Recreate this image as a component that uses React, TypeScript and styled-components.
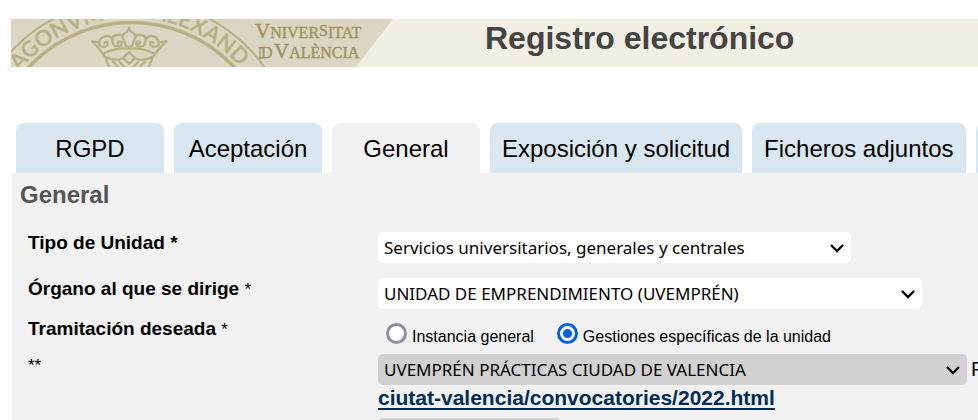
import React from 'react';
import styled, { createGlobalStyle } from 'styled-components';

const Global = createGlobalStyle`
  * { box-sizing: border-box; }
  html { scrollbar-width: none; }
  body {
    margin: 0;
    overflow-x: hidden;
    background: #fff;
    color: #000;
    font-family: "Liberation Sans", Arial, sans-serif;
  }
`;
const Page = styled.div`
  padding: 19px 0 0 11px;
`;
const Banner = styled.header`
  display: flex;
  background: #f1efe3;
`;
const LogoSvg = styled.svg`
  flex: none;
  display: block;
  width: 382px;
  height: 48px;
`;
const Title = styled.h1`
  flex: 1;
  margin: 0;
  padding-left: 92px;
  color: #444;
  font-size: 32px;
  line-height: 38px;
  white-space: nowrap;
`;
const Tabs = styled.nav`
  display: flex;
  gap: 10px;
  margin-top: 56px;
  padding-left: 5px;
  overflow: hidden;
`;
const Tab = styled.button<{ $active?: boolean }>`
  flex: none;
  min-width: 148px;
  height: 50px;
  padding: 2px 12px 0;
  border: 0;
  border-radius: 8px 8px 0 0;
  background: ${(p) => (p.$active ? '#f1f1f1' : '#d9e7f0')};
  color: #000;
  font: 24px "Liberation Sans", Arial, sans-serif;
  white-space: nowrap;
`;
const Panel = styled.main`
  margin-left: 1px;
  padding: 4px 0 0 8px;
  background: #f1f1f1;
`;
const Heading = styled.h2`
  margin: 0;
  color: #555;
  font-size: 24px;
  line-height: 36px;
`;
const Form = styled.form`
  display: grid;
  grid-template-columns: 350px 1fr;
  padding: 19px 0 0 8px;
`;
const Label = styled.label`
  font-size: 19px;
  line-height: 22px;
`;
const Star = styled.span`
  font-size: 17px;
`;
const Field = styled.div<{ $space?: number }>`
  min-width: 0;
  padding-bottom: ${(p) => p.$space ?? 0}px;
`;
const SelectBox = styled.span<{ $width: number }>`
  display: inline-grid;
  flex: none;
  width: ${(p) => p.$width}px;
  align-items: center;
  vertical-align: top;
`;
const SelectInput = styled.select<{ $muted?: boolean }>`
  grid-area: 1 / 1;
  width: 100%;
  height: 31px;
  padding: 0 28px 0 6px;
  border: 0;
  border-radius: 5px;
  appearance: none;
  background: ${(p) => (p.$muted ? '#d1d1d1' : '#fff')};
  color: #000;
  font: 17px "Noto Sans", Verdana, sans-serif;
`;
const Chevron = styled.svg`
  grid-area: 1 / 1;
  justify-self: end;
  width: 14px;
  height: 10px;
  margin-right: 7px;
  pointer-events: none;
`;
const Radios = styled.div`
  display: flex;
  gap: 23px;
  padding: 5px 0 4px 8px;
`;
const RadioLabel = styled.label`
  display: flex;
  gap: 5px;
  font-size: 16px;
  line-height: 27px;
  white-space: nowrap;
`;
const Radio = styled.input`
  width: 21px;
  height: 21px;
  margin: 0;
  border: 3px solid #8f8f9d;
  border-radius: 50%;
  appearance: none;
  background: #fff;
  &:checked {
    border-color: #0061e0;
    background: radial-gradient(circle, #0061e0 4px, #fff 5px);
  }
`;
const Line = styled.div`
  display: flex;
  gap: 4px;
  overflow: hidden;
  font-size: 20px;
  line-height: 31px;
`;
const Link = styled.a`
  display: block;
  padding-bottom: 7px;
  color: #002d55;
  font-size: 21px;
  font-weight: bold;
  line-height: 26px;
  text-decoration-thickness: 2px;
  text-underline-offset: 3px;
`;

function Logo() {
  return (
    <LogoSvg viewBox="0 0 382 48" role="img" aria-label="Universitat de València">
      <path d="M0 0H382L345 48H0Z" fill="#dad6c3" />
      <g fill="none" stroke="#b8b084">
        <circle cx="120.5" cy="144" r="164" strokeWidth="2" />
        <circle cx="120.5" cy="144" r="140.5" strokeWidth="3.5" />
        <path id="ring" d="M-24.5 144A145 145 0 0 1 265.5 144" stroke="none" />
        <g transform="translate(74 -1) scale(.3333)" strokeWidth="7" strokeLinecap="round" strokeLinejoin="round">
          <path d="M22 70L42 73C40 88 66 92 68 78C69 70 60 70 58 75M42 73C48 50 76 48 82 66C84 78 86 86 98 86C112 86 114 70 104 70C98 70 96 76 100 78M82 66C82 48 102 48 112 54L118 46Q130 42 132 29Q134 42 146 46L152 54C162 48 182 48 182 66M160 78C168 76 168 70 160 70C150 70 152 86 166 86C178 86 180 78 182 66C188 48 216 50 222 73M206 75C204 70 195 70 196 78C198 92 224 88 222 73L244 70" />
          <path d="M22 70Q50 98 62 120Q66 134 74 150M244 70Q214 98 202 120Q198 134 190 150" />
          <path d="M112 54C112 66 122 70 120 78Q122 86 132 86Q142 86 144 78C142 70 152 66 152 54" />
          <path d="M58 106Q94 88 132 92Q170 88 206 106M64 118Q98 132 114 120L132 102L150 120Q166 132 200 118M84 132Q100 142 98 152M180 132Q164 142 166 152M104 132L124 152M160 132L140 152M116 122L132 138L148 122" />
        </g>
      </g>
      <g fill="#b8b084" fontFamily="Lato, sans-serif" fontWeight="700" fontSize="22">
        <text><textPath href="#ring" startOffset="99">AGONVM</textPath></text>
        <text><textPath href="#ring" startOffset="247">ALEXAND</textPath></text>
      </g>
      <g fill="#9d935d" stroke="#9d935d" strokeWidth=".4" fontFamily="'Liberation Serif', serif" fontSize="16">
        <text x="244" y="19"><tspan fontSize="21">V</tspan>NIVER<tspan dy="-2">S</tspan><tspan dy="2">ITAT</tspan></text>
        <path d="M249 29V39M247.5 28.7H252M247.5 39H252" fill="none" strokeWidth="1.3" />
        <text x="250" y="39">D</text>
        <text x="263" y="39"><tspan fontSize="21">V</tspan>ALÈNCIA</text>
      </g>
    </LogoSvg>
  );
}

function Select({ id, width, muted, children }: { id: string; width: number; muted?: boolean; children?: string }) {
  return (
    <SelectBox $width={width}>
      <SelectInput id={id} $muted={muted} aria-label={children ? undefined : 'Opciones'}>
        {children && <option>{children}</option>}
      </SelectInput>
      <Chevron viewBox="0 0 14 10" aria-hidden="true">
        <path d="M1 2L7 8L13 2" fill="none" stroke="#000" strokeWidth="2.3" />
      </Chevron>
    </SelectBox>
  );
}

export default function App() {
  return (
    <>
      <Global />
      <Page>
        <Banner>
          <Logo />
          <Title>Registro electrónico</Title>
        </Banner>
        <Tabs>
          <Tab>RGPD</Tab>
          <Tab>Aceptación</Tab>
          <Tab $active>General</Tab>
          <Tab>Exposición y solicitud</Tab>
          <Tab>Ficheros adjuntos</Tab>
          <Tab aria-label="Siguiente" />
        </Tabs>
        <Panel>
          <Heading>General</Heading>
          <Form>
            <Label htmlFor="tipo"><b>Tipo de Unidad *</b></Label>
            <Field $space={15}>
              <Select id="tipo" width={473}>Servicios universitarios, generales y centrales</Select>
            </Field>
            <Label htmlFor="organo"><b>Órgano al que se dirige</b> <Star>*</Star></Label>
            <Field $space={9}>
              <Select id="organo" width={544}>UNIDAD DE EMPRENDIMIENTO (UVEMPRÉN)</Select>
            </Field>
            <Label as="span" id="tramitacion"><b>Tramitación deseada</b> <Star>*</Star></Label>
            <Radios role="radiogroup" aria-labelledby="tramitacion">
              <RadioLabel><Radio type="radio" name="tramite" />Instancia general</RadioLabel>
              <RadioLabel><Radio type="radio" name="tramite" defaultChecked />Gestiones específicas de la unidad</RadioLabel>
            </Radios>
            <Label htmlFor="gestion"><Star>**</Star></Label>
            <Field>
              <Line>
                <Select id="gestion" width={589} muted>UVEMPRÉN PRÁCTICAS CIUDAD DE VALENCIA</Select>
                <span>F</span>
              </Line>
              <Link href="#">ciutat-valencia/convocatories/2022.html</Link>
              <Select id="detalle" width={183} muted />
            </Field>
          </Form>
        </Panel>
      </Page>
    </>
  );
}
